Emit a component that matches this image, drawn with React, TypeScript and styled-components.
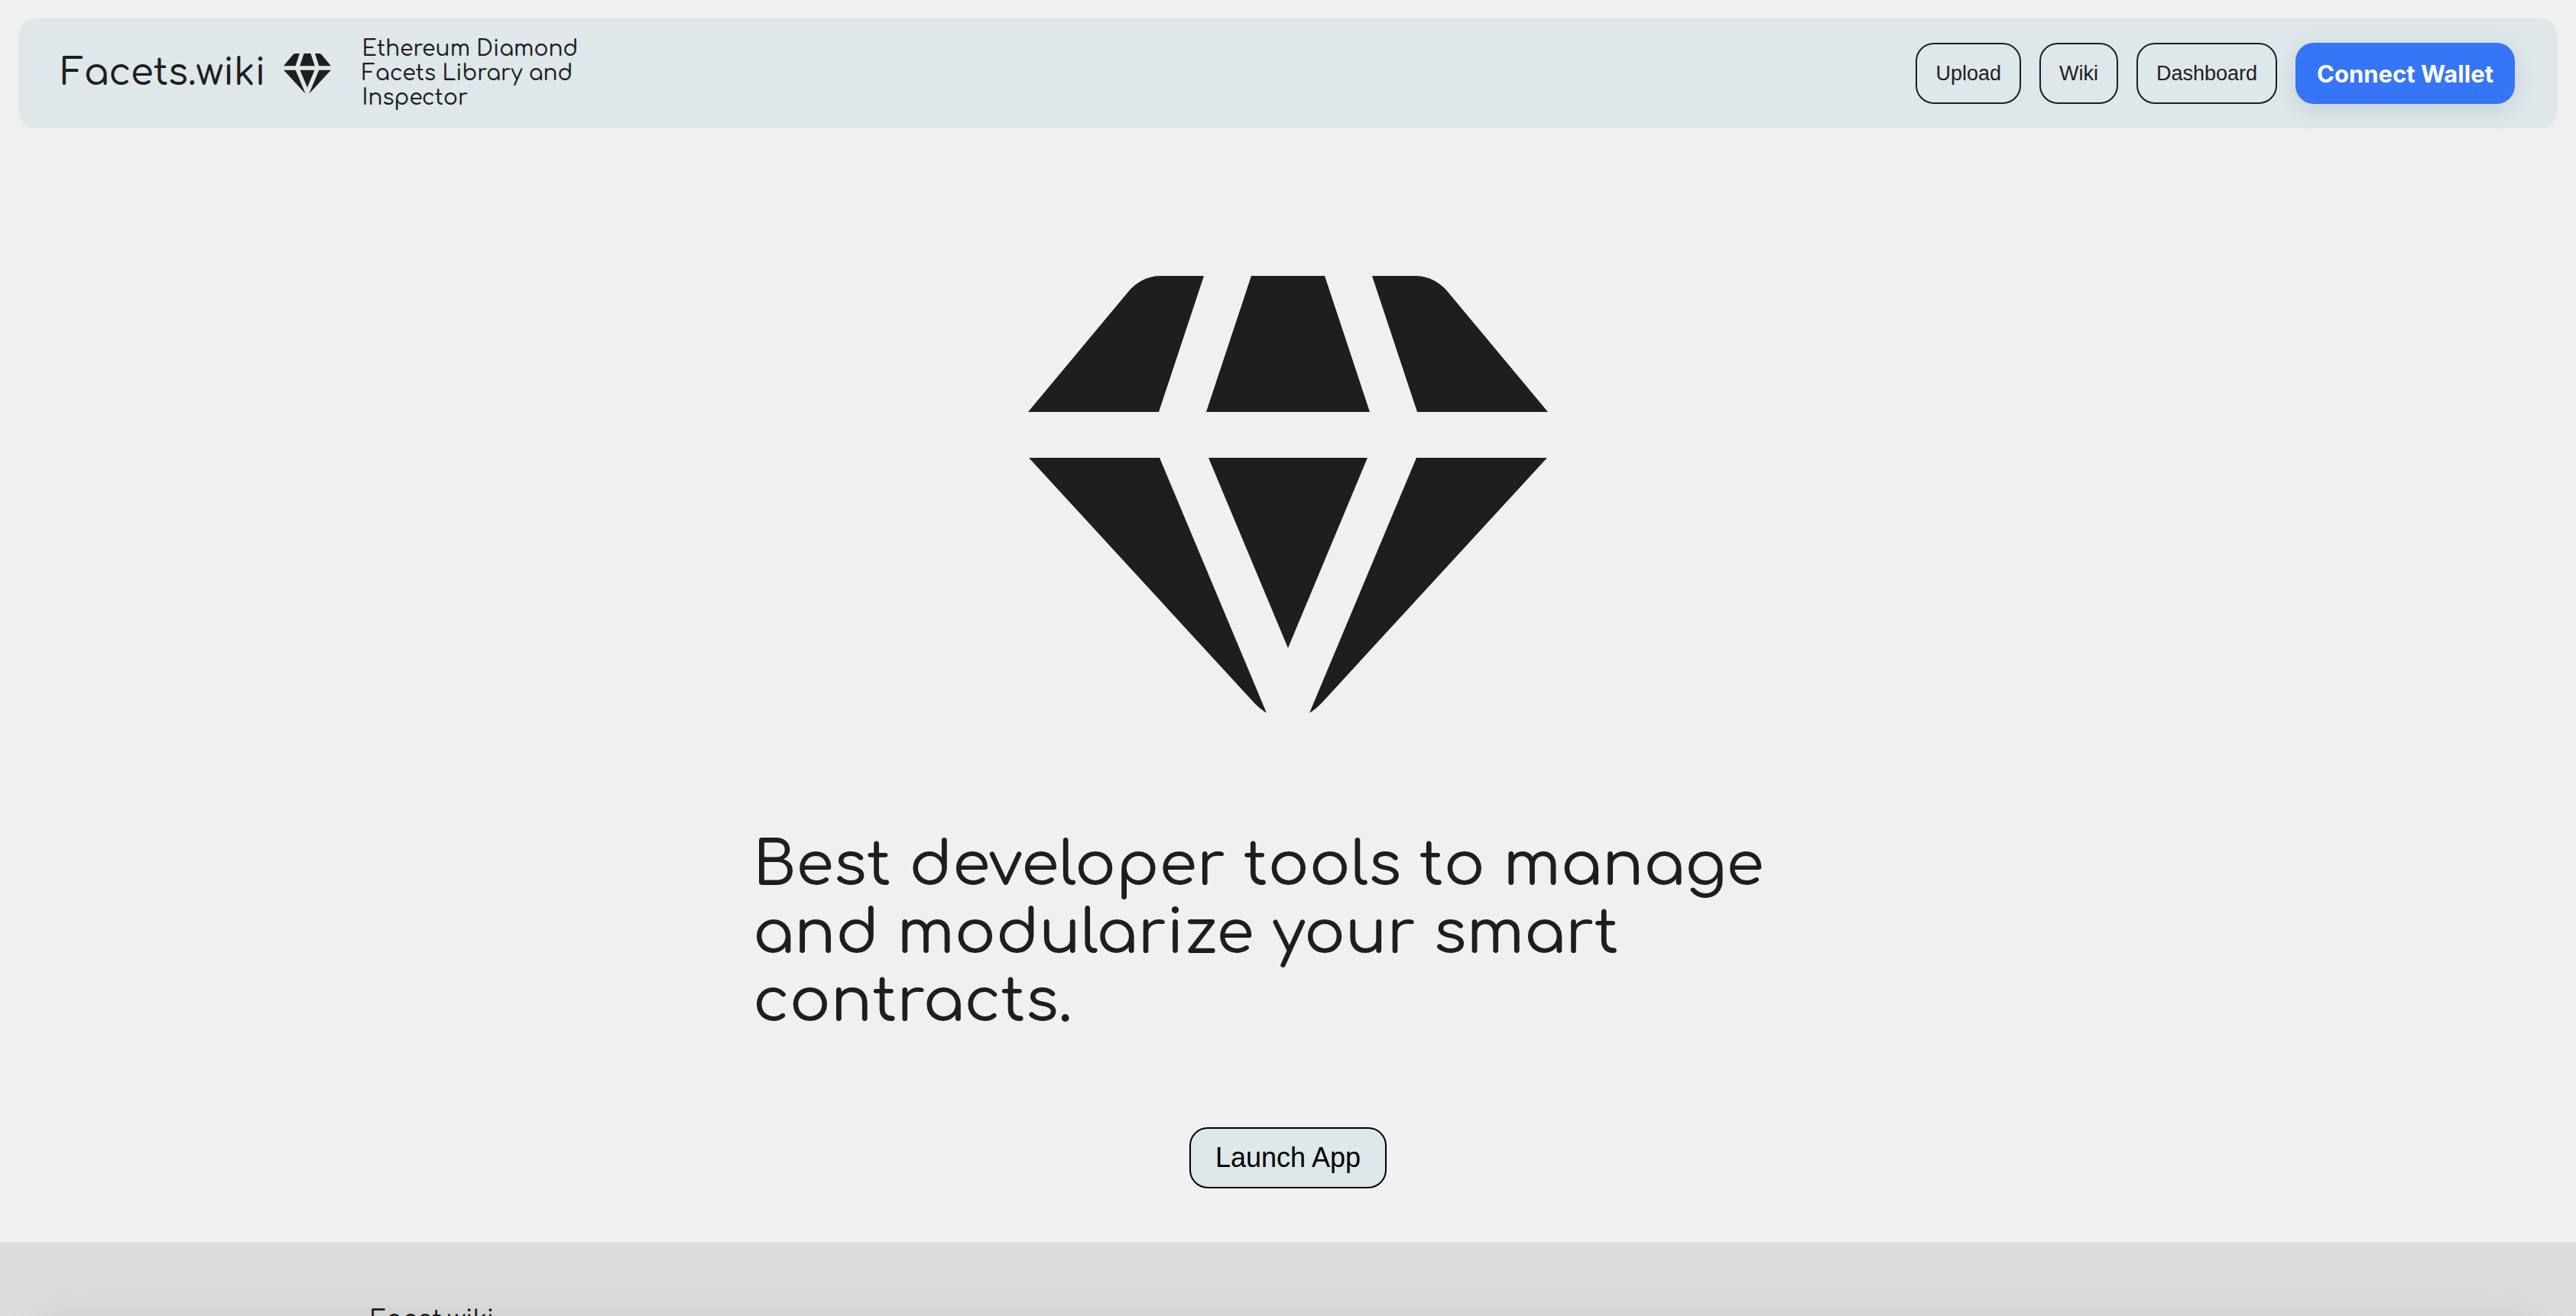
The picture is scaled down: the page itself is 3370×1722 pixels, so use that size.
import React from "react";
import styled, { createGlobalStyle } from "styled-components";

const ink = "#1e1e1e";
const mist = "#dee7ea";
const display = `Comfortaa, "DejaVu Sans", sans-serif`;
const ui = `Arial, "Liberation Sans", sans-serif`;

const GlobalStyle = createGlobalStyle`
  *, *::before, *::after { box-sizing: border-box; }
  body {
    margin: 0;
    background: #f0f0f0;
    color: ${ink};
    font-family: ${display};
    font-weight: 500;
  }
`;

const Page = styled.div`
  display: flex;
  flex-direction: column;
  height: 100vh;
  overflow: hidden;
`;

const NavBar = styled.header`
  display: flex;
  align-items: center;
  justify-content: space-between;
  flex: none;
  margin: 24px 24px 0;
  padding: 24px 56px;
  border-radius: 24px;
  background: ${mist};
`;

const Brand = styled.div`
  display: flex;
  align-items: center;
`;

const BrandName = styled.a`
  margin-right: 24px;
  color: inherit;
  font-size: 48px;
  line-height: 56px;
  text-decoration: none;
`;

const Tagline = styled.p`
  width: 300px;
  margin: 0 0 0 40px;
  font-size: 28px;
  line-height: 32px;
`;

const Actions = styled.nav`
  display: flex;
  gap: 24px;
`;

const Button = styled.button`
  height: 80px;
  padding: 0 24px;
  border: 2px solid ${ink};
  border-radius: 24px;
  background: transparent;
  color: ${ink};
  font-family: ${ui};
  font-size: 27px;
  cursor: pointer;
`;

const WalletButton = styled(Button)`
  padding: 0 28px;
  border: 0;
  background: #3575f6;
  color: #fff;
  font-family: Inter, ${ui};
  font-size: 31px;
  font-weight: 700;
  box-shadow: 0 8px 32px rgba(0, 0, 0, 0.1);
`;

const LaunchButton = styled(Button)`
  padding: 0 32px;
  border-color: #000;
  background: ${mist};
  color: #000;
  font-size: 36px;
`;

const Hero = styled.main`
  display: flex;
  flex-direction: column;
  align-items: center;
  flex: none;
  padding: 193px 24px 70px;
`;

const Headline = styled.h1`
  width: 100%;
  max-width: 1400px;
  margin: 155px 0 120px;
  font-size: 80px;
  font-weight: 500;
  line-height: 89px;
`;

const Gem = styled.svg<{ $width: number }>`
  display: block;
  flex: none;
  width: ${(p) => p.$width}px;
  height: auto;
  fill: ${ink};
`;

const Footer = styled.footer`
  position: relative;
  flex: 1;
  min-height: 0;
  overflow: hidden;
  padding-top: 84px;
  background: #ddd;

  &::after {
    content: "";
    position: absolute;
    top: 100%;
    left: 48px;
    right: 48px;
    height: 160px;
    border-radius: 24px;
    box-shadow: 0 0 56px rgba(0, 0, 0, 0.08);
  }
`;

const FooterName = styled.div`
  max-width: 2400px;
  margin: 0 auto;
  font-size: 32px;
  line-height: 36px;
`;

function Diamond({ width }: { width: number }) {
  return (
    <Gem $width={width} viewBox="0 0 680 572" aria-hidden="true">
      <path d="M0 178L130 22C141 8 156 0 174 0H230L171 178Z" />
      <path d="M292 0H388L447 178H233Z" />
      <path d="M680 178L550 22C539 8 524 0 506 0H450L509 178Z" />
      <path d="M1 238H172L312 572C307 569 302 565 297 560Z" />
      <path d="M236 238H444L340 487Z" />
      <path d="M679 238H508L368 572C373 569 378 565 383 560Z" />
    </Gem>
  );
}

export default function App() {
  return (
    <Page>
      <GlobalStyle />
      <NavBar>
        <Brand>
          <BrandName href="#">Facets.wiki</BrandName>
          <Diamond width={62} />
          <Tagline>Ethereum Diamond Facets Library and Inspector</Tagline>
        </Brand>
        <Actions>
          <Button type="button">Upload</Button>
          <Button type="button">Wiki</Button>
          <Button type="button">Dashboard</Button>
          <WalletButton type="button">Connect Wallet</WalletButton>
        </Actions>
      </NavBar>
      <Hero>
        <Diamond width={680} />
        <Headline>
          Best developer tools to manage and modularize your smart contracts.
        </Headline>
        <LaunchButton type="button">Launch App</LaunchButton>
      </Hero>
      <Footer>
        <FooterName>Facet.wiki</FooterName>
      </Footer>
    </Page>
  );
}
